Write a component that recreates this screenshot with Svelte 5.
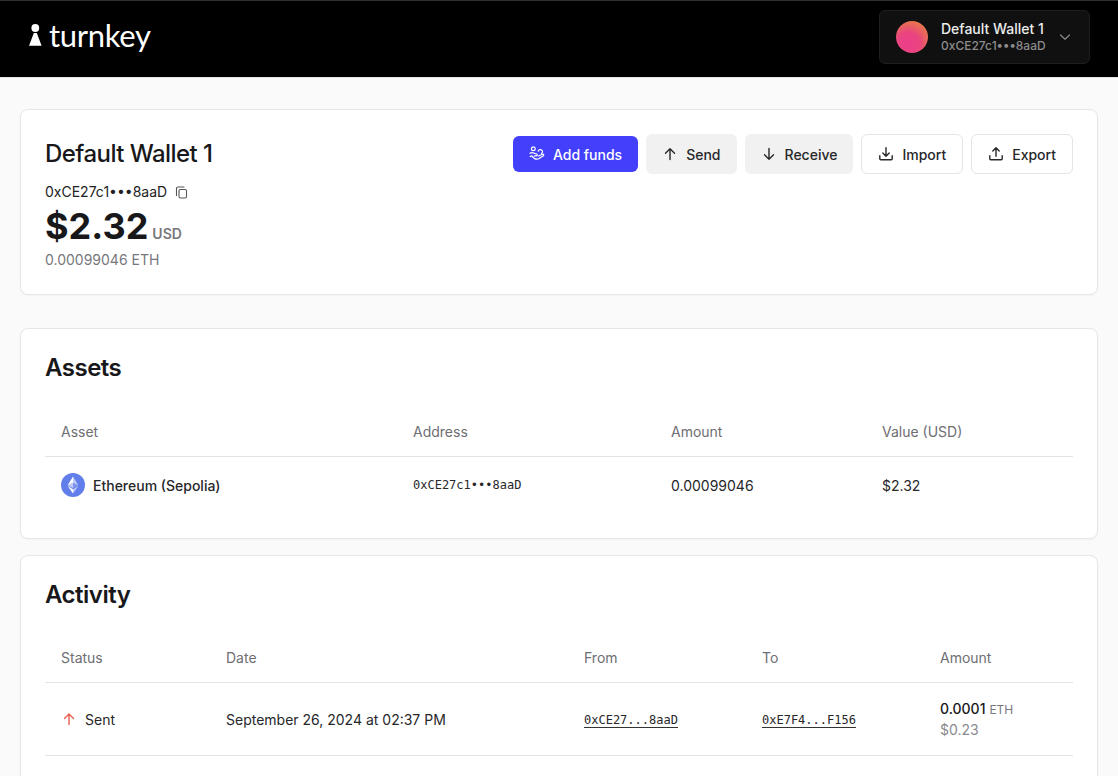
<script lang="ts">
	const address = '0xCE27c1•••8aaD';
	const actions = [
		{ label: 'Send', icon: 'up', kind: 'soft' },
		{ label: 'Receive', icon: 'down', kind: 'soft' },
		{ label: 'Import', icon: 'import', kind: 'outline' },
		{ label: 'Export', icon: 'export', kind: 'outline' }
	];
</script>

{#snippet actionIcon(name: string)}
	<svg class="btn-icon" width="16" height="16" viewBox="0 0 16 16" fill="none" stroke="currentColor" stroke-width="1.4" stroke-linecap="round" stroke-linejoin="round" aria-hidden="true">
		{#if name === 'up'}
			<path d="M8 13.5V2.8M3.5 7.3 8 2.8l4.5 4.5" />
		{:else if name === 'down'}
			<path d="M8 2.5v10.7M3.5 8.7 8 13.2l4.5-4.5" />
		{:else if name === 'import'}
			<path d="M8 1.8v8.4M4.8 7 8 10.2 11.2 7M1.8 9.8v3a1 1 0 0 0 1 1h10.4a1 1 0 0 0 1-1v-3" />
		{:else}
			<path d="M8 10.2V1.8M4.8 5 8 1.8 11.2 5M1.8 9.8v3a1 1 0 0 0 1 1h10.4a1 1 0 0 0 1-1v-3" />
		{/if}
	</svg>
{/snippet}

<header class="topbar">
	<div class="logo">
		<svg width="14" height="23" viewBox="0 0 14 23" aria-hidden="true">
			<circle cx="6.300" cy="4" r="3.900" fill="#fff" />
			<path d="M4.800 9h3L12.600 21.800H0z" fill="#fff" />
		</svg>
		<span class="logo-text">turnkey</span>
	</div>
	<button class="wallet-switch">
		<span class="avatar"></span>
		<span class="wallet-text">
			<span class="wallet-name">Default Wallet 1</span>
			<span class="wallet-addr">{address}</span>
		</span>
		<svg class="chev" width="12" height="12" viewBox="0 0 12 12" fill="none" aria-hidden="true">
			<path d="M1.500 4l4.500 4.200L10.500 4" stroke="#8a8a8a" stroke-width="1.200" stroke-linecap="round" stroke-linejoin="round" />
		</svg>
	</button>
</header>

<main class="page">
	<section class="card summary">
		<div class="summary-left">
			<h1>Default Wallet 1</h1>
			<div class="address-row">
				<span>{address}</span>
				<svg width="13" height="13" viewBox="0 0 13 13" fill="none" stroke="#555" stroke-width="1.100" aria-hidden="true">
					<rect x="4" y="3.500" width="7.500" height="8.500" rx="1.500" />
					<path d="M9 1H3a1.500 1.500 0 0 0-1.500 1.500V9.500" stroke-linecap="round" />
				</svg>
			</div>
			<div class="balance"><span class="big">$2.32</span><span class="cur">USD</span></div>
			<div class="eth">0.00099046 ETH</div>
		</div>
		<div class="actions">
			<button class="btn primary">
				<svg class="btn-icon" width="16" height="16" viewBox="0 0 16 16" fill="none" stroke="currentColor" stroke-width="1.200" stroke-linecap="round" stroke-linejoin="round" aria-hidden="true">
					<circle cx="4.300" cy="2.800" r="1.900" />
					<path d="M9.200 5.200a2.200 2.200 0 0 1 4.300.6c0 .8-.4 1.300-1 1.800" />
					<path d="M1 7.300c1.400-.9 2.700-.9 3.800-.2l2.900.9c1 .4.800 1.900-.4 1.900H5.400" />
					<path d="M1.200 10.600l1.600-.8c1.900 2.600 4.700 3.900 7 3l4.600-3.100c.8-.6.200-1.900-1-1.500L9.700 10" />
				</svg>
				Add funds
			</button>
			{#each actions as a}
				<button class="btn {a.kind}">
					{@render actionIcon(a.icon)}
					{a.label}
				</button>
			{/each}
		</div>
	</section>

	<section class="card assets">
		<h2>Assets</h2>
		<div class="row head asset-cols">
			<div>Asset</div>
			<div>Address</div>
			<div>Amount</div>
			<div>Value (USD)</div>
		</div>
		<div class="row asset-cols asset-row">
			<div class="asset-name">
				<svg width="24" height="24" viewBox="0 0 24 24" aria-hidden="true">
					<circle cx="12" cy="12" r="12" fill="#627eea" />
					<path d="M12 3.500v6.300l5.300 2.400z" fill="#fff" fill-opacity=".6" />
					<path d="M12 3.500 6.700 12.200 12 9.800z" fill="#fff" />
					<path d="M12 16.200v4.300l5.300-7.400z" fill="#fff" fill-opacity=".6" />
					<path d="M12 20.500v-4.300l-5.300-3.100z" fill="#fff" />
					<path d="M12 15.200l5.300-3-5.300-2.400z" fill="#fff" fill-opacity=".2" />
					<path d="M6.700 12.200l5.300 3V9.800z" fill="#fff" fill-opacity=".6" />
				</svg>
				<span>Ethereum (Sepolia)</span>
			</div>
			<div class="mono">{address}</div>
			<div>0.00099046</div>
			<div>$2.32</div>
		</div>
	</section>

	<section class="card activity">
		<h2>Activity</h2>
		<div class="row head activity-cols">
			<div>Status</div>
			<div>Date</div>
			<div>From</div>
			<div>To</div>
			<div>Amount</div>
		</div>
		<div class="row activity-cols activity-row">
			<div class="status">
				<svg width="16" height="16" viewBox="0 0 16 16" fill="none" stroke="#e5604d" stroke-width="1.400" stroke-linecap="round" stroke-linejoin="round" aria-hidden="true">
					<path d="M8 13.500V3M3.500 7.500 8 3l4.500 4.500" />
				</svg>
				<span>Sent</span>
			</div>
			<div>September 26, 2024 at 02:37 PM</div>
			<div><span class="mono link">0xCE27...8aaD</span></div>
			<div><span class="mono link">0xE7F4...F156</span></div>
			<div class="amount">
				<div class="amount-eth"><span class="val">0.0001</span> <span class="unit">ETH</span></div>
				<div class="usd">$0.23</div>
			</div>
		</div>
	</section>
</main>

<style>
	:global(html), :global(body) {
		margin: 0;
		height: 100%;
		overflow: hidden;
		background: #fafafa;
	}

	:global(body) {
		font-family: Inter, 'Liberation Sans', sans-serif;
		color: #18181b;
	}

	button {
		font-family: inherit;
		cursor: pointer;
	}

	.topbar {
		box-sizing: border-box;
		height: 78px;
		background: #000;
		border-top: 1px solid #2e2e2e;
		border-bottom: 1px solid #e4e4e4;
		display: flex;
		align-items: flex-start;
		justify-content: space-between;
		padding: 9px 28px 0 29px;
	}

	.logo {
		display: flex;
		align-items: flex-start;
		gap: 6px;
		padding-top: 14px;
	}

	.logo-text {
		color: #fff;
		font-family: Lato, sans-serif;
		font-size: 31px;
		line-height: 22px;
		letter-spacing: -0.3px;
		font-weight: 400;
	}

	.wallet-switch {
		box-sizing: border-box;
		width: 211px;
		height: 54px;
		display: flex;
		align-items: center;
		padding: 0 16px;
		background: #101010;
		border: 1px solid #1e1e1e;
		border-radius: 6px;
		text-align: left;
	}

	.avatar {
		width: 32px;
		height: 32px;
		flex: none;
		border-radius: 50%;
		background: radial-gradient(circle at 38% 72%, #ec3f8a 0%, #e9447f 38%, #e8932e 100%);
		margin-right: 13px;
	}

	.wallet-text {
		display: flex;
		flex-direction: column;
		flex: 1;
	}

	.wallet-name {
		color: #ececec;
		font-size: 14px;
		line-height: 18px;
		font-weight: 500;
	}

	.wallet-addr {
		color: #8c8c8c;
		font-size: 12px;
		line-height: 16px;
		font-weight: 500;
	}

	.chev {
		margin-right: 2px;
	}

	.page {
		padding: 31px 20px 0;
		display: flex;
		flex-direction: column;
	}

	.card {
		box-sizing: border-box;
		background: #fff;
		border: 1px solid #e6e6e6;
		border-radius: 8px;
		box-shadow: 0 1px 2px rgba(0, 0, 0, 0.03);
		padding: 0 24px;
	}

	.summary {
		height: 186px;
		display: flex;
		justify-content: space-between;
		align-items: flex-start;
		padding-top: 25px;
	}

	h1, h2 {
		margin: 0;
		color: #18181b;
	}

	h1 {
		font-size: 24px;
		line-height: 38px;
		font-weight: 500;
		letter-spacing: -0.55px;
	}

	.address-row {
		display: flex;
		align-items: center;
		gap: 8px;
		font-size: 14px;
		line-height: 20px;
		margin-top: 9px;
		color: #222;
	}

	.balance {
		display: flex;
		align-items: baseline;
		gap: 4px;
		line-height: 44px;
		margin-top: 2px;
	}

	.big {
		font-size: 36px;
		font-weight: 700;
	}

	.cur {
		font-size: 14px;
		font-weight: 600;
		color: #77777c;
	}

	.eth {
		font-size: 14px;
		line-height: 20px;
		color: #77777c;
		margin-top: -6px;
	}

	.actions {
		display: flex;
		align-items: center;
		gap: 8px;
		margin-top: -1px;
	}

	.btn {
		box-sizing: border-box;
		display: inline-flex;
		align-items: center;
		justify-content: center;
		gap: 8px;
		height: 40px;
		padding: 0 15px;
		font-size: 14px;
		font-weight: 500;
		border-radius: 6px;
		border: 1px solid transparent;
		color: #27272a;
		background: none;
		white-space: nowrap;
	}

	.primary {
		height: 36px;
		background: #4340fb;
		color: #fff;
	}

	.soft {
		background: #f1f1f1;
	}

	.outline {
		background: #fff;
		border-color: #e4e4e4;
		padding: 0 16px;
	}

	h2 {
		font-size: 24px;
		line-height: 32px;
		padding-top: 23px;
		font-weight: 600;
		letter-spacing: -0.5px;
	}

	.assets {
		height: 211px;
		margin-top: 33px;
	}

	.activity {
		margin-top: 16px;
		height: 300px;
	}

	.row {
		display: grid;
		align-items: center;
		font-size: 14px;
		color: #27272a;
		border-bottom: 1px solid #e4e4e4;
	}

	.row > div {
		padding-left: 16px;
	}

	.asset-cols {
		grid-template-columns: 352px 258px 211px 207px;
	}

	.activity-cols {
		grid-template-columns: 165px 358px 178px 178px 149px;
	}

	.head {
		box-sizing: border-box;
		height: 50px;
		color: #6e6e73;
	}

	.assets .head {
		margin-top: 23px;
	}

	.activity .head {
		margin-top: 22px;
	}

	.asset-row {
		height: 56px;
		border-bottom: none;
	}

	.activity-row {
		box-sizing: border-box;
		height: 73px;
	}

	.asset-name {
		display: flex;
		align-items: center;
		gap: 8px;
		font-weight: 500;
	}

	.mono {
		font-family: 'DejaVu Sans Mono', 'Liberation Mono', monospace;
		font-size: 12px;
	}

	.link {
		display: inline-block;
		line-height: 14px;
		border-bottom: 1px solid #333;
	}

	.status {
		display: flex;
		align-items: center;
		gap: 8px;
	}

	.amount-eth {
		line-height: 20px;
	}

	.val {
		font-weight: 500;
		color: #18181b;
	}

	.unit {
		font-size: 12px;
		color: #77777c;
	}

	.usd {
		line-height: 20px;
		color: #8a8a8f;
	}
</style>
